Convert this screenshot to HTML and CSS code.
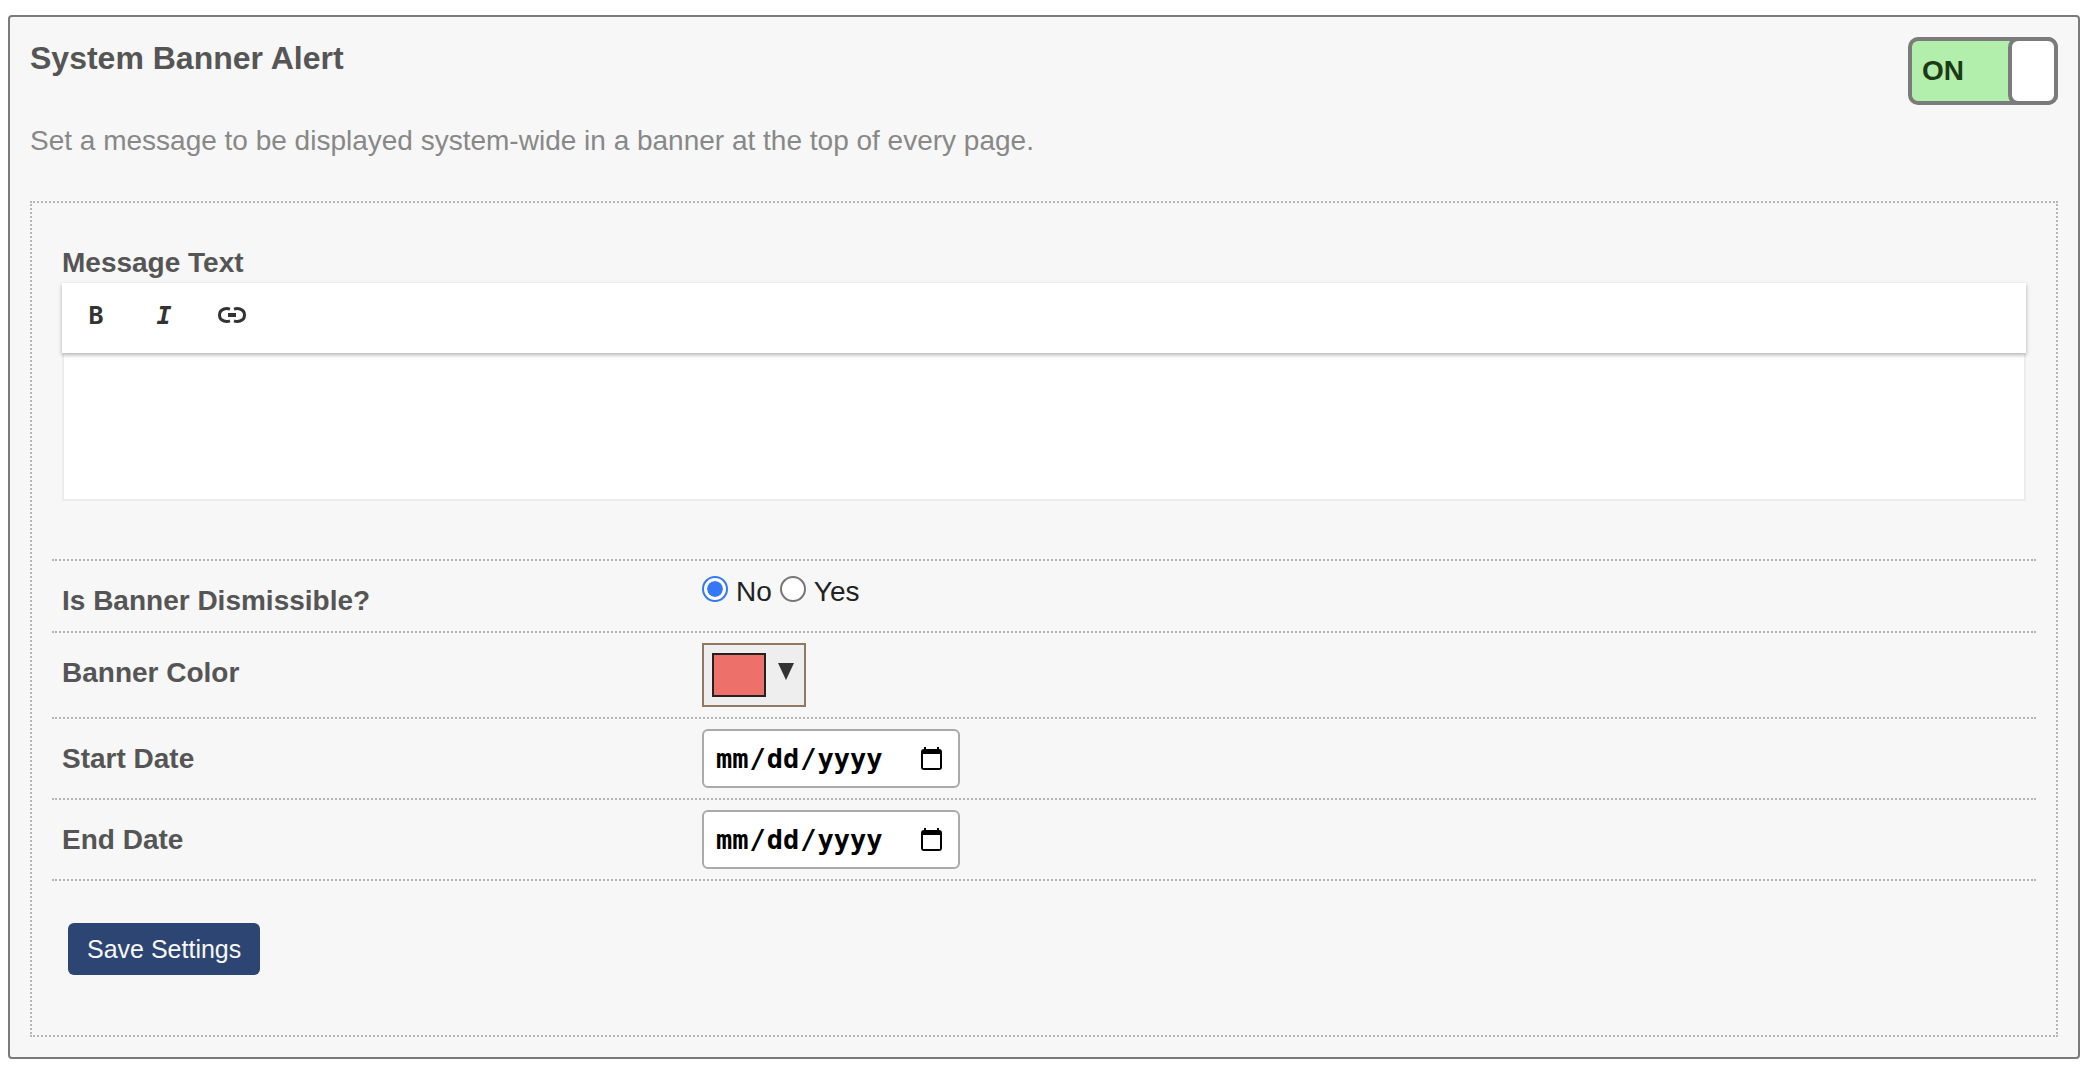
FILE: index.html
```html
<!DOCTYPE html>
<html lang="en">
<head>
    <meta charset="utf-8" />
    <title>System Banner Alert</title>
    <link rel="stylesheet" href="styles.css">
</head>
<body>
    <form class="panel">
        <div class="panel-header">
            <div>
                <h1>System Banner Alert</h1>
                <p class="description">Set a message to be displayed system-wide in a banner at the top of every page.</p>
            </div>
            <button id="bannerToggle" class="toggle" type="button" role="switch" aria-checked="true">
                <span class="toggle-text">ON</span>
                <span class="toggle-knob"></span>
            </button>
        </div>

        <div class="settings">
            <div class="message">
                <label for="messageText">Message Text</label>
                <div class="toolbar">
                    <button type="button" title="Bold">B</button>
                    <button type="button" title="Italic"><i>I</i></button>
                    <button type="button" title="Link">
                        <svg width="28" height="16" viewBox="0 0 28 16" fill="none" stroke="#333" stroke-width="3">
                            <path d="M12 2.2C10 1.5 7.5 1.5 6 2C3.5 2.8 1.5 5 1.5 8s2 5.2 4.5 6c1.5 .5 4 .5 6-.2" />
                            <path d="M16 2.2c2-.7 4.5-.7 6-.2c2.500 .8 4.500 3 4.500 6s-2 5.200-4.500 6c-1.500 .5-4 .5-6-.2" />
                            <path d="M10 8h8" stroke-width="4" />
                        </svg>
                    </button>
                </div>
                <textarea id="messageText"></textarea>
            </div>

            <div class="row">
                <span class="row-label" id="dismissLabel">Is Banner Dismissible?</span>
                <div class="radios" role="radiogroup" aria-labelledby="dismissLabel">
                    <input id="dismissNo" type="radio" name="dismissible" checked />
                    <label for="dismissNo">No</label>
                    <input id="dismissYes" type="radio" name="dismissible" />
                    <label for="dismissYes">Yes</label>
                </div>
            </div>
            <div class="row">
                <label class="row-label" for="bannerColor">Banner Color</label>
                <div class="field">
                    <button id="bannerColor" class="color-button" type="button">
                        <span class="swatch"></span>
                        <svg width="16" height="34" viewBox="0 0 16 34"><path d="M0 10h16L8 27z" fill="#333" /></svg>
                    </button>
                </div>
            </div>
            <div class="row">
                <label class="row-label" for="startDate">Start Date</label>
                <div class="field">
                    <input id="startDate" type="date" />
                </div>
            </div>
            <div class="row">
                <label class="row-label" for="endDate">End Date</label>
                <div class="field">
                    <input id="endDate" type="date" />
                </div>
            </div>

            <button class="save" type="submit">Save Settings</button>
        </div>
    </form>
</body>
</html>
```

FILE: styles.css
```css
* {
    margin: 0;
    padding: 0;
    box-sizing: border-box;
}

body {
    padding: 15px 18px 24px 8px;
    background: white;
    color: #222;
    font-family: "Liberation Sans", Arial, Helvetica, sans-serif;
    font-size: 28px;
    line-height: 40px;
}

button {
    cursor: pointer;
}

.panel {
    padding: 20px;
    background: #f7f7f7;
    border: 2px solid #7b7b7b;
    border-radius: 4px;
}

.panel-header {
    display: flex;
    justify-content: space-between;
    align-items: flex-start;
    margin-bottom: 40px;
}

h1 {
    margin-bottom: 42px;
    color: #555;
    font-size: 32px;
    line-height: 42px;
}

.description {
    color: #888;
}

.toggle {
    display: flex;
    justify-content: space-between;
    align-items: center;
    width: 150px;
    height: 68px;
    padding-left: 10px;
    background: #b2eeac;
    border: 4px solid #7b7b7b;
    border-radius: 10px;
    color: #1c3a14;
    font-family: inherit;
    font-size: 28px;
    font-weight: bold;
}

.toggle-knob {
    width: 50px;
    height: 68px;
    margin-right: -4px;
    background: white;
    border: 4px solid #7b7b7b;
    border-radius: 10px;
}

.settings {
    padding: 20px;
    border: 2px dotted #b5b5b5;
}

.message {
    padding: 20px 10px 58px;
    border-bottom: 2px dotted #b5b5b5;
}

    .message label {
        display: block;
        color: #555;
        font-weight: bold;
    }

    .message textarea {
        display: block;
        width: 100%;
        height: 148px;
        padding: 20px;
        background: white;
        border: 2px solid #ececec;
        border-top: none;
        outline: none;
        resize: none;
        font: inherit;
    }

.toolbar {
    display: flex;
    gap: 8px;
    position: relative;
    height: 70px;
    padding: 2px 4px 8px;
    background: white;
    box-shadow: 0 2px 4px rgba(0, 0, 0, 0.3);
}

    .toolbar button {
        display: flex;
        justify-content: center;
        align-items: center;
        width: 60px;
        background: none;
        border: none;
        color: #333;
        font: bold 25px "DejaVu Sans Mono", monospace;
    }

.row {
    display: grid;
    grid-template-columns: 640px 1fr;
    padding: 0 10px;
    border-bottom: 2px dotted #b5b5b5;
}

.row-label {
    padding: 20px 0 10px;
    color: #555;
    font-weight: bold;
}

.field {
    display: flex;
    align-items: flex-start;
    padding: 10px 0;
}

.radios {
    display: flex;
    align-items: flex-start;
    gap: 8px;
    padding-top: 15px;
    line-height: 32px;
}

    .radios input {
        appearance: none;
        width: 26px;
        height: 26px;
        background: white;
        border: 2px solid #767676;
        border-radius: 50%;
    }

    .radios input:checked {
        padding: 3px;
        background: #3478f6 content-box;
        background-color: #3478f6;
        border-color: #3478f6;
        box-shadow: inset 0 0 0 3px white;
    }

.color-button {
    display: flex;
    align-items: flex-start;
    gap: 12px;
    padding: 8px;
    width: 104px;
    height: 64px;
    background: #eee;
    border: 2px solid #8f7a61;
}

.swatch {
    width: 54px;
    height: 44px;
    background: #ed706a;
    border: 2px solid #222;
}

input[type="date"] {
    width: 258px;
    height: 59px;
    padding: 0 16px 0 11px;
    background: white;
    border: 2px solid #aaa;
    border-radius: 6px;
    color: black;
    font: bold 27px "DejaVu Sans Mono", monospace;
}

    input[type="date"]::-webkit-calendar-picker-indicator {
        width: 21px;
        height: 23px;
        padding: 0;
        background: url("data:image/svg+xml,%3Csvg xmlns='http://www.w3.org/2000/svg' viewBox='0 0 21 23'%3E%3Cpath d='M3 0h2v2h11V0h2v2a3 3 0 0 1 3 3v15a3 3 0 0 1-3 3H3a3 3 0 0 1-3-3V5a3 3 0 0 1 3-3zM2 7v14h17V7z' fill-rule='evenodd'/%3E%3C/svg%3E") no-repeat;
    }

.save {
    display: block;
    margin: 42px 16px 40px;
    padding: 0 19px;
    height: 52px;
    background: #2d4572;
    border: none;
    border-radius: 6px;
    color: #f7f7f7;
    font-family: inherit;
    font-size: 25px;
}
```
